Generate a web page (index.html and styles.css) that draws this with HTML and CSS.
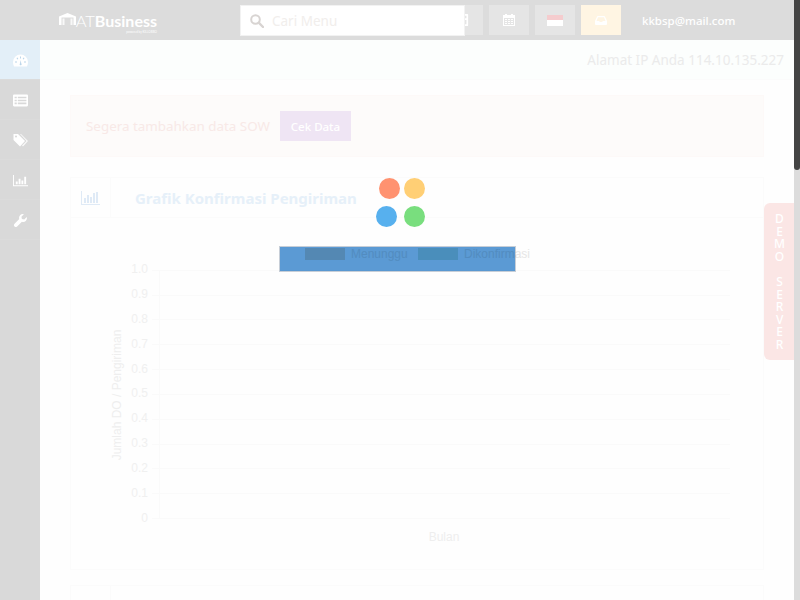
FILE: index.html
```html
<!DOCTYPE html>
<html lang="id">
<head>
    <meta charset="UTF-8">
    <meta name="viewport" content="width=device-width, initial-scale=1.0">
    <title>AT Business</title>
    <link rel="stylesheet" href="styles.css">
</head>
<body>
    <header class="topbar">
        <div class="logo">
            <svg class="logo-mark" viewBox="0 0 17 12">
                <path d="M0 3.500 8.500 0 17 3.500V12h-2.500V4.500h-12V12H0z" fill="#fff"/>
                <path d="M3.500 5.500h2V12h-2zM11.500 5.500h2V12h-2z" fill="#fff" opacity=".8"/>
            </svg>
            <div class="logo-text">
                <span class="logo-name"><span class="logo-at">AT</span><b class="logo-biz">Business</b></span>
                <span class="logo-sub">powered by KILLOBBO</span>
            </div>
        </div>
        <nav class="top-buttons">
            <button class="top-btn">
                <svg class="ico" viewBox="0 0 14 14"><path d="M2 0h10a1 1 0 0 1 1 1v12a1 1 0 0 1-1 1H2a1 1 0 0 1-1-1V1a1 1 0 0 1 1-1zm1 2v3h8V2zm0 5v5h2V7zm3 0v5h2V7zm3 0v5h2V7z" fill="#fff" fill-rule="evenodd"/></svg>
            </button>
            <button class="top-btn">
                <svg class="ico" viewBox="0 0 12 12"><path d="M2 0h2v1h4V0h2v1h2v11H0V1h2zM1 4v7h10V4zm1 1h2v1H2zm3 0h2v1H5zm3 0h2v1H8zM2 7h2v1H2zm3 0h2v1H5zm3 0h2v1H8zM2 9h2v1H2zm3 0h2v1H5zm3 0h2v1H8z" fill="#fff" fill-rule="evenodd"/></svg>
            </button>
            <button class="top-btn">
                <span class="flag"><span class="flag-red"></span></span>
            </button>
            <button class="top-btn top-btn-mail">
                <svg class="ico-mail" viewBox="0 0 12 9"><path d="M3 0h6a1 1 0 0 1 1 .7L12 5v3a1 1 0 0 1-1 1H1a1 1 0 0 1-1-1V5L2 .7A1 1 0 0 1 3 0zm0 1.200L1.500 5H4l1 1h2l1-1h2.500L9 1.200z" fill="#fff" fill-rule="evenodd"/></svg>
            </button>
        </nav>
        <span class="user-mail">kkbsp@mail.com</span>
        <div class="search">
            <svg class="search-ico" viewBox="0 0 14 14"><circle cx="5.500" cy="5.500" r="4.300" fill="none" stroke="#d8d4d2" stroke-width="2"/><path d="M8.700 8.700 13 13" stroke="#d8d4d2" stroke-width="2.400" stroke-linecap="round"/></svg>
            <span class="search-text">Cari Menu</span>
        </div>
    </header>

    <div class="page">
        <aside class="sidebar">
            <a class="side-item active">
                <svg class="side-ico" viewBox="0 0 15 12"><path d="M7.500 0a7.500 7.500 0 0 1 7.500 7.500c0 1.500-.3 3-1 4.500H1c-.7-1.500-1-3-1-4.500A7.500 7.500 0 0 1 7.500 0z" fill="#fff"/><path d="M7 2h1v2H7zM3.500 3.500l1-.5.800 1.500-1 .5zM10.500 3l1 .5-.8 1.500-1-.5zM2 7h2v1H2zM11 7h2v1h-2zM7 9l.5-3.500.8 3.500a1 1 0 1 1-1.300 0z" fill="#bcd6ea"/></svg>
            </a>
            <a class="side-item">
                <svg class="side-ico" viewBox="0 0 14 11"><path d="M1 0h12a1 1 0 0 1 1 1v9a1 1 0 0 1-1 1H1a1 1 0 0 1-1-1V1a1 1 0 0 1 1-1zm.500 2v1.500h2V2zm3 0v1.500h8V2zm-3 2.700v1.500h2V4.700zm3 0v1.500h8V4.700zM1.500 7.400v1.500h2V7.400zm3 0v1.500h8V7.400z" fill="#fff" fill-rule="evenodd"/></svg>
            </a>
            <a class="side-item">
                <svg class="side-ico" viewBox="0 0 15 13"><path d="M.5 0H5l7 7-5 5.500L.5 6z" fill="#fff"/><path d="M7 0h1l7 7-5 5.500-1-1L13.500 7z" fill="#fff" opacity=".85"/><circle cx="3" cy="2.500" r="1" fill="#d9d9d9"/></svg>
            </a>
            <a class="side-item">
                <svg class="side-ico" viewBox="0 0 16 12"><path d="M0 0h1v11h15v1H0zM3 7h2v3H3zM6 4h2v6H6zM9 6h2v4H9zM12 2h2v8h-2z" fill="#fff"/></svg>
            </a>
            <a class="side-item">
                <svg class="side-ico" viewBox="0 0 14 14"><path d="M13.700 3.300 11 6l-2.500-.5L8 3l2.700-2.700a4 4 0 0 0-5 5.200L.6 10.600a1.900 1.900 0 0 0 2.800 2.800l5.100-5.100a4 4 0 0 0 5.200-5z" fill="#fff"/></svg>
            </a>
        </aside>

        <main class="content">
            <div class="ip-bar">Alamat IP Anda 114.10.135.227</div>
            <div class="content-inner">
                <div class="alert">
                    <span class="alert-text">Segera tambahkan data SOW</span>
                    <button class="alert-btn">Cek Data</button>
                </div>

                <section class="card">
                    <div class="card-head">
                        <div class="card-icon">
                            <svg class="head-ico" viewBox="0 0 19 14"><path d="M0 13h19v1H0zM0 0h1v13H0zM3 7h2v5H3zM6 4h2v8H6zM9 6h2v6H9zM12 2h2v10h-2zM15 1h2v11h-2z" fill="#dfeaf6"/></svg>
                        </div>
                        <h2 class="card-title">Grafik Konfirmasi Pengiriman</h2>
                    </div>
                    <div class="chart">
                        <svg class="chart-svg" viewBox="71 218 692 350">
                            <path class="grid" d="M152 270.500H730M152 295.500H730M152 319.500H730M152 344.500H730M152 369.500H730M152 394.500H730M152 419.500H730M152 444.500H730M152 468.500H730M152 493.500H730M152 518.500H730M159.500 270V518"/>
                            <g class="ticks">
                                <text x="148" y="273">1.0</text>
                                <text x="148" y="298">0.9</text>
                                <text x="148" y="323">0.8</text>
                                <text x="148" y="348">0.7</text>
                                <text x="148" y="373">0.6</text>
                                <text x="148" y="397">0.5</text>
                                <text x="148" y="422">0.4</text>
                                <text x="148" y="447">0.3</text>
                                <text x="148" y="472">0.2</text>
                                <text x="148" y="497">0.1</text>
                                <text x="148" y="522">0</text>
                            </g>
                            <text class="axis-title" transform="translate(121 395) rotate(-90)">Jumlah DO / Pengiriman</text>
                            <text class="axis-title" x="444" y="541">Bulan</text>
                            <rect class="swatch-a" x="305" y="248" width="40" height="12"/>
                            <text class="legend" x="351" y="258">Menunggu</text>
                            <rect class="swatch-b" x="418" y="248" width="40" height="12"/>
                            <text class="legend" x="464" y="258">Dikonfirmasi</text>
                        </svg>
                    </div>
                </section>

                <section class="card">
                    <div class="card-head">
                        <div class="card-icon"></div>
                    </div>
                </section>
            </div>
        </main>
    </div>

    <div class="demo-tab">DEMO SERVER</div>

    <div class="scrollbar"><div class="scroll-thumb"></div></div>

    <div class="loader-box"></div>
    <div class="loader-dots">
        <span class="dot dot-red"></span>
        <span class="dot dot-yellow"></span>
        <span class="dot dot-blue"></span>
        <span class="dot dot-green"></span>
    </div>
</body>
</html>
```

FILE: styles.css
```css
html, body {
    height: 100%;
    overflow: hidden;
}

body {
    margin: 0;
    font-family: "Noto Sans", sans-serif;
    background: #fefefe;
}

/* top bar */
.topbar {
    position: relative;
    display: flex;
    align-items: center;
    height: 40px;
    padding-left: 59px;
    background: #dcdcdc;
}

.logo {
    display: flex;
    align-items: center;
    gap: 2px;
    width: 384px;
    flex-shrink: 0;
}

.logo-mark {
    width: 17px;
    height: 12px;
    margin-top: -3px;
}

.logo-text {
    display: flex;
    flex-direction: column;
    align-items: flex-end;
    width: 79px;
    margin-top: 4px;
    color: #fff;
    font-family: Lato, sans-serif;
}

.logo-name {
    font-size: 16px;
    line-height: 19px;
    white-space: nowrap;
}

.logo-at {
    font-weight: 300;
    font-size: 16.500px;
}

.logo-biz {
    font-weight: 700;
}

.logo-sub {
    margin-top: -1px;
    font-size: 3px;
    line-height: 4px;
    white-space: nowrap;
}

.top-buttons {
    display: flex;
    gap: 6px;
}

.top-btn {
    display: flex;
    align-items: center;
    justify-content: center;
    width: 40px;
    height: 30px;
    padding: 0;
    border: none;
    background: #e5e5e5;
}

.top-btn-mail {
    background: #fff5e3;
}

.ico {
    width: 12px;
    height: 12px;
}

.ico-mail {
    width: 12px;
    height: 9px;
}

.flag {
    display: block;
    width: 16px;
    height: 11px;
    background: #fff;
}

.flag-red {
    display: block;
    height: 5px;
    background: #f5ccce;
}

.user-mail {
    margin-left: 21px;
    color: #fff;
    font-size: 11.500px;
    font-weight: 500;
}

.search {
    position: absolute;
    left: 240px;
    top: 5px;
    display: flex;
    align-items: center;
    gap: 8px;
    box-sizing: border-box;
    width: 225px;
    height: 31px;
    padding-left: 9px;
    background: #fff;
    border: 1px solid #f2f2f2;
}

.search-ico {
    width: 14px;
    height: 14px;
}

.search-text {
    color: #f1eeec;
    font-size: 13.500px;
}

/* page frame */
.page {
    display: flex;
    height: 560px;
}

.sidebar {
    width: 40px;
    flex-shrink: 0;
    background: #d9d9d9;
}

.side-item {
    display: flex;
    align-items: center;
    justify-content: center;
    box-sizing: border-box;
    height: 40px;
    padding-top: 2px;
    border-bottom: 1px solid #dbdbdb;
}

.side-item.active {
    background: #e3eff8;
}

.side-ico {
    width: 15px;
    height: 13px;
}

.content {
    flex: 1;
    min-width: 0;
}

.ip-bar {
    box-sizing: border-box;
    height: 40px;
    padding-right: 16px;
    line-height: 40px;
    text-align: right;
    font-size: 13.500px;
    color: #ebebeb;
    background: #fcfefd;
    border-bottom: 1px solid #fbfbfb;
}

.content-inner {
    padding: 15px 36px 0 30px;
}

.alert {
    display: flex;
    align-items: center;
    gap: 10px;
    box-sizing: border-box;
    height: 62px;
    padding-left: 15px;
    margin-bottom: 20px;
    background: #fdfbfa;
    border: 1px solid #fdf9f8;
}

.alert-text {
    color: #f8e9e7;
    font-size: 13.400px;
}

.alert-btn {
    width: 71px;
    height: 30px;
    padding: 0;
    border: none;
    background: #efe5f4;
    color: #fff;
    font-family: inherit;
    font-size: 11.500px;
    font-weight: 500;
}

.card {
    margin-bottom: 15px;
    background: #fefefe;
    border: 1px solid #fbfbfb;
}

.card-head {
    display: flex;
    align-items: center;
    height: 39px;
    border-bottom: 1px solid #fbfbfb;
}

.card-icon {
    display: flex;
    align-items: center;
    justify-content: center;
    box-sizing: border-box;
    width: 40px;
    height: 39px;
    border-right: 1px solid #fbfbfb;
}

.head-ico {
    width: 19px;
    height: 14px;
}

.card-title {
    margin: 0 0 0 24px;
    color: #e6f0f9;
    font-size: 15px;
    font-weight: 700;
}

.chart {
    height: 351px;
}

.chart-svg {
    display: block;
    width: 692px;
    height: 350px;
    font-family: "Liberation Sans", sans-serif;
    font-size: 12px;
}

.grid {
    fill: none;
    stroke: #fafafa;
    stroke-width: 1;
}

.ticks text {
    fill: #f0f0f0;
    text-anchor: end;
}

.axis-title {
    fill: #eeeeee;
    text-anchor: middle;
}

.legend {
    fill: #e6e6e6;
}

.swatch-a {
    fill: #ecdfd6;
}

.swatch-b {
    fill: #cfeae0;
}

/* overlays */
.demo-tab {
    position: fixed;
    right: 6px;
    top: 203px;
    box-sizing: border-box;
    width: 30px;
    height: 157px;
    padding-top: 7px;
    border-radius: 6px 0 0 6px;
    background: #fbe6e5;
    color: #fff;
    font-size: 12px;
    font-weight: 500;
    line-height: 30px;
    writing-mode: vertical-rl;
    text-orientation: upright;
    letter-spacing: -4.400px;
    white-space: pre;
}

.scrollbar {
    position: fixed;
    right: 0;
    top: 0;
    width: 6px;
    height: 100%;
    background: #dcdcdc;
}

.scroll-thumb {
    height: 170px;
    border-radius: 0 0 3px 3px;
    background: #444444;
}

.loader-box {
    position: fixed;
    left: 279px;
    top: 246px;
    box-sizing: border-box;
    width: 237px;
    height: 26px;
    background: #5b9bd5;
    border: 1px solid #c8cfd8;
    mix-blend-mode: multiply;
}

.loader-dots {
    position: fixed;
    left: 376px;
    top: 178px;
    width: 50px;
    height: 50px;
}

.dot {
    position: absolute;
    width: 21px;
    height: 21px;
    border-radius: 50%;
}

.dot-red {
    left: 3px;
    top: 0;
    background: #ff9270;
}

.dot-yellow {
    left: 28px;
    top: 0;
    background: #ffcf75;
}

.dot-blue {
    left: 0;
    top: 28px;
    background: #57b0ee;
}

.dot-green {
    left: 28px;
    top: 28px;
    background: #79de7e;
}
```
